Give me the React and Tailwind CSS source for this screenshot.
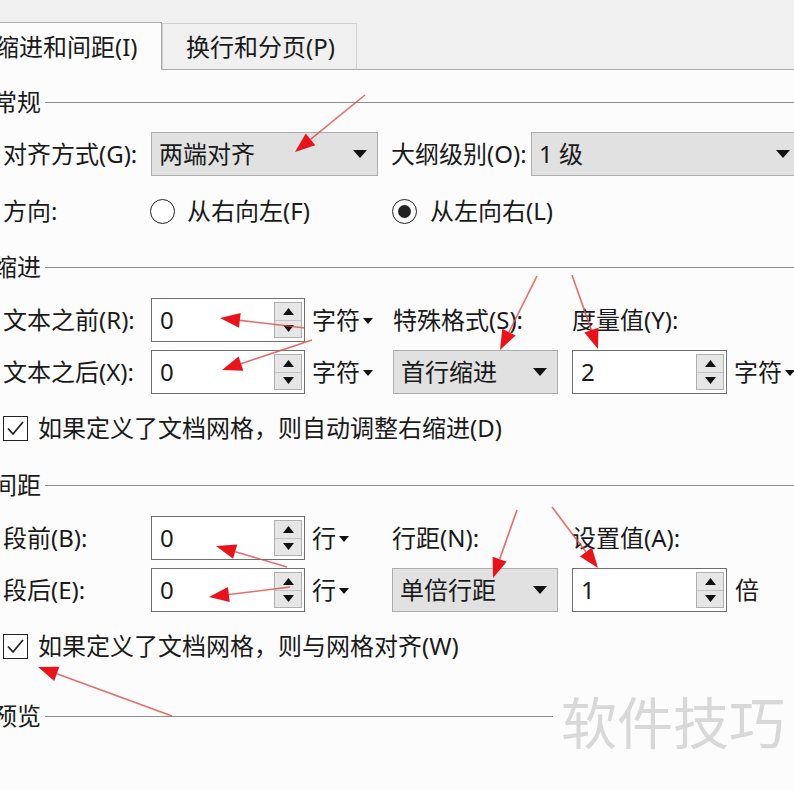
import React from "react";

const FONT = { fontFamily: '"Noto Sans", "Noto Sans CJK SC", sans-serif' };

function DownTri({ w = 14, h = 8 }) {
  return (
    <svg width={w} height={h} viewBox="0 0 14 8">
      <path d="M0 0H14L7 8Z" fill="#111" />
    </svg>
  );
}

function Select({ children, className }) {
  return (
    <div
      className={
        "h-[44px] shrink-0 bg-[#e1e1e1] border border-[#adadad] flex items-center pl-[7px] pr-[10px] " +
        className
      }
    >
      <span className="flex-1 whitespace-nowrap">{children}</span>
      <DownTri />
    </div>
  );
}

function Spin({ value, className }) {
  return (
    <div
      className={
        "h-[44px] shrink-0 bg-white border border-[#6f6f6f] flex items-center pl-[8px] pr-[2px] " +
        className
      }
    >
      <span className="flex-1">{value}</span>
      <div className="w-[28px] h-[36px] border border-[#b0b0b0] bg-[#e6e6e6] flex flex-col">
        <div className="flex-1 flex items-center justify-center border-b border-[#c4c4c4]">
          <svg width="11" height="7" viewBox="0 0 11 7">
            <path d="M0 7H11L5.5 0Z" fill="#111" />
          </svg>
        </div>
        <div className="flex-1 flex items-center justify-center">
          <svg width="11" height="7" viewBox="0 0 11 7">
            <path d="M0 0H11L5.5 7Z" fill="#111" />
          </svg>
        </div>
      </div>
    </div>
  );
}

function Unit({ children, className }) {
  return (
    <div className={"shrink-0 flex items-center whitespace-nowrap " + className}>
      <span>{children}</span>
      <span className="ml-[3px] mt-[2px]">
        <svg width="10" height="6" viewBox="0 0 10 6">
          <path d="M0 0H10L5 6Z" fill="#111" />
        </svg>
      </span>
    </div>
  );
}

function Header({ children, className, extra }) {
  return (
    <div className={"flex items-center h-[30px] " + className}>
      <span className="ml-[-10px] whitespace-nowrap leading-none">{children}</span>
      <div className="flex-1 h-px bg-[#8f8f8f] ml-[4px]" />
      {extra}
    </div>
  );
}

function Radio({ checked }) {
  return (
    <div className="w-[25px] h-[25px] shrink-0 rounded-full border-[1.5px] border-[#222] flex items-center justify-center bg-white">
      {checked && <div className="w-[13px] h-[13px] rounded-full bg-[#222]" />}
    </div>
  );
}

function Check() {
  return (
    <div className="w-[25px] h-[25px] shrink-0 border-[1.5px] border-[#222] flex items-center justify-center bg-white">
      <svg width="19" height="17" viewBox="0 0 19 17">
        <path d="M2 8.5L7 14L17 2" fill="none" stroke="#222" strokeWidth="1.8" />
      </svg>
    </div>
  );
}

const ARROWS = [
  [365, 95, 295, 152],
  [305, 328, 220, 318],
  [312, 340, 222, 370],
  [537, 276, 500, 350],
  [572, 275, 598, 349],
  [287, 567, 216, 546],
  [290, 587, 209, 597],
  [517, 510, 493, 578],
  [552, 507, 598, 568],
  [172, 716, 38, 667],
];

function Arrows() {
  return (
    <svg
      className="absolute inset-0 pointer-events-none"
      width="794"
      height="790"
      viewBox="0 0 794 790"
    >
      {ARROWS.map(([x1, y1, x2, y2], i) => {
        const dx = x2 - x1;
        const dy = y2 - y1;
        const L = Math.hypot(dx, dy);
        const ux = dx / L;
        const uy = dy / L;
        const len = 20;
        const w = 7.5;
        const bx = x2 - ux * len;
        const by = y2 - uy * len;
        const px = -uy;
        const py = ux;
        const pts = `${x2},${y2} ${bx + px * w},${by + py * w} ${bx - px * w},${by - py * w}`;
        return (
          <g key={i}>
            <line
              x1={x1}
              y1={y1}
              x2={bx}
              y2={by}
              stroke="#e04848"
              strokeOpacity="0.8"
              strokeWidth="1.6"
            />
            <polygon points={pts} fill="#e8141c" />
          </g>
        );
      })}
    </svg>
  );
}

export default function App() {
  return (
    <div
      className="relative w-[794px] h-[790px] overflow-hidden bg-[#fcfcfc] text-[#1a1a1a] text-[24px]"
      style={FONT}
    >
      {/* Tabs */}
      <div className="h-[70px] bg-[#f0f0f0] flex items-end">
        <div className="w-[162px] h-[48px] shrink-0 bg-[#fcfcfc] border-t border-r border-[#a9a9a9] flex items-center">
          <span className="ml-[-5px] whitespace-nowrap leading-none">缩进和间距(I)</span>
        </div>
        <div className="w-[195px] h-[47px] shrink-0 bg-[#f0f0f0] border border-[#cfcfcf] border-b-[#a9a9a9] flex items-center pl-[23px]">
          <span className="whitespace-nowrap leading-none">换行和分页(P)</span>
        </div>
        <div className="flex-1 h-px bg-[#a9a9a9]" />
      </div>

      <div className="pl-[3px]">
        {/* 常规 */}
        <Header className="mt-[17px]">常规</Header>

        <div className="flex items-center h-[44px] mt-[15px]">
          <div className="w-[148px] shrink-0 whitespace-nowrap">对齐方式(G):</div>
          <Select className="w-[227px]">两端对齐</Select>
          <div className="w-[140px] shrink-0 ml-[13px] whitespace-nowrap">大纲级别(O):</div>
          <Select className="w-[270px]">1 级</Select>
        </div>

        <div className="flex items-center h-[44px] mt-[13px]">
          <div className="w-[147px] shrink-0">方向:</div>
          <div className="w-[242px] shrink-0 flex items-center">
            <Radio />
            <span className="ml-[12px] whitespace-nowrap">从右向左(F)</span>
          </div>
          <div className="flex items-center">
            <Radio checked />
            <span className="ml-[13px] whitespace-nowrap">从左向右(L)</span>
          </div>
        </div>

        {/* 缩进 */}
        <Header className="mt-[19px]">缩进</Header>

        <div className="flex items-center h-[44px] mt-[16px]">
          <div className="w-[148px] shrink-0 whitespace-nowrap">文本之前(R):</div>
          <Spin value="0" className="w-[154px]" />
          <Unit className="ml-[7px] w-[81px]">字符</Unit>
          <div className="w-[179px] shrink-0 whitespace-nowrap">特殊格式(S):</div>
          <div className="whitespace-nowrap">度量值(Y):</div>
        </div>

        <div className="flex items-center h-[44px] mt-[8px]">
          <div className="w-[148px] shrink-0 whitespace-nowrap">文本之后(X):</div>
          <Spin value="0" className="w-[154px]" />
          <Unit className="ml-[7px] w-[81px]">字符</Unit>
          <Select className="w-[165px]">首行缩进</Select>
          <Spin value="2" className="w-[155px] ml-[14px]" />
          <Unit className="ml-[7px]">字符</Unit>
        </div>

        <div className="flex items-center h-[30px] mt-[19px]">
          <Check />
          <span className="ml-[10px] whitespace-nowrap">如果定义了文档网格，则自动调整右缩进(D)</span>
        </div>

        {/* 间距 */}
        <Header className="mt-[27px]">间距</Header>

        <div className="flex items-center h-[44px] mt-[16px]">
          <div className="w-[148px] shrink-0 whitespace-nowrap">段前(B):</div>
          <Spin value="0" className="w-[154px]" />
          <Unit className="ml-[7px] w-[80px]">行</Unit>
          <div className="w-[180px] shrink-0 whitespace-nowrap">行距(N):</div>
          <div className="whitespace-nowrap">设置值(A):</div>
        </div>

        <div className="flex items-center h-[44px] mt-[8px]">
          <div className="w-[148px] shrink-0 whitespace-nowrap">段后(E):</div>
          <Spin value="0" className="w-[154px]" />
          <Unit className="ml-[7px] w-[80px]">行</Unit>
          <Select className="w-[166px]">单倍行距</Select>
          <Spin value="1" className="w-[155px] ml-[14px]" />
          <span className="ml-[8px]">倍</span>
        </div>

        <div className="flex items-center h-[30px] mt-[19px]">
          <Check />
          <span className="ml-[10px] whitespace-nowrap">如果定义了文档网格，则与网格对齐(W)</span>
        </div>

        {/* 预览 */}
        <Header
          className="mt-[40px]"
          extra={
            <span className="ml-[8px] mr-[9px] mt-[12px] text-[56px] leading-none text-[#d8d8d8] whitespace-nowrap">
              软件技巧
            </span>
          }
        >
          预览
        </Header>
      </div>

      <Arrows />
    </div>
  );
}
